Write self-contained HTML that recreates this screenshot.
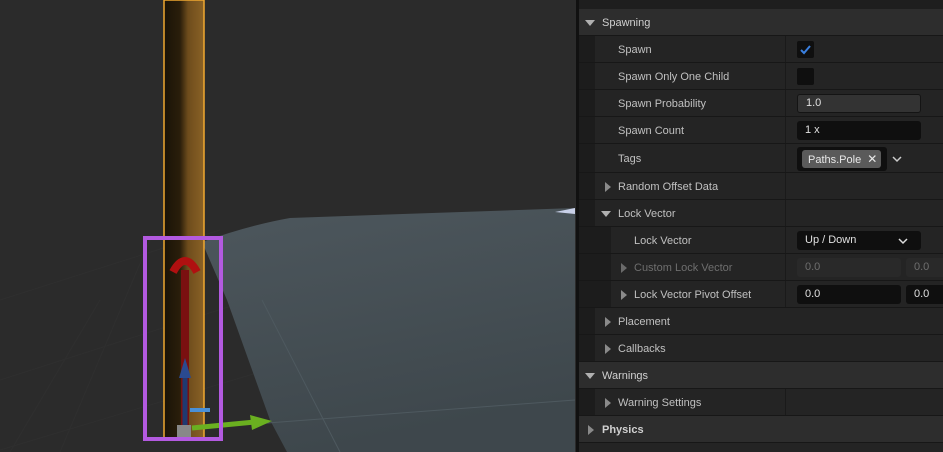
<!DOCTYPE html><html><head><style>
body{margin:0;width:943px;height:452px;overflow:hidden;background:#2a2a2a;font-family:"Liberation Sans",sans-serif;font-size:11px;color:#c0c0c0;position:relative}
.a{position:absolute}
.row{position:absolute;left:579px;width:364px;background:#242424;border-bottom:1px solid #171717;box-sizing:border-box}
.hdr{background:#2d2d2d}
.lbl{position:absolute;top:50%;transform:translateY(-50%);margin-top:1px;white-space:nowrap}
.col{position:absolute;left:206px;top:0;bottom:0;width:1px;background:#1a1a1a}
.gut{position:absolute;top:0;bottom:0;background:#1c1c1c}
.tri-d{position:absolute;width:0;height:0;border-left:5px solid transparent;border-right:5px solid transparent;border-top:6px solid #b0b0b0;top:50%;margin-top:-2px}
.tri-r{position:absolute;width:0;height:0;border-top:5px solid transparent;border-bottom:5px solid transparent;border-left:6px solid #8a8a8a;top:50%;margin-top:-4px}
.box{position:absolute;background:#0f0f0f;border-radius:3px;color:#e0e0e0;box-sizing:border-box;padding-left:8px;line-height:19px;height:19px}
</style></head><body>
<svg class="a" style="left:0;top:0" width="576" height="452">
<rect width="576" height="452" fill="#2b2b2b"/>
<g stroke="#2f2f2f" stroke-width="1">
<line x1="0" y1="300" x2="220" y2="230"/><line x1="0" y1="380" x2="250" y2="300"/><line x1="0" y1="450" x2="300" y2="360"/>
<line x1="60" y1="452" x2="150" y2="240"/><line x1="10" y1="452" x2="100" y2="300"/>
</g>
<defs>
<linearGradient id="pl" x1="0" y1="0" x2="0.3" y2="1"><stop offset="0" stop-color="#4d575d"/><stop offset="1" stop-color="#3e474c"/></linearGradient>
<linearGradient id="p" x1="0" x2="1"><stop offset="0" stop-color="#1a1307"/><stop offset="0.4" stop-color="#2a1e0b"/><stop offset="0.6" stop-color="#6e4c1c"/><stop offset="1" stop-color="#8a6226"/></linearGradient>
</defs>
<path d="M202,242 Q250,225 290,218 L575,208 L575,452 L287,452 L270,420 L227,300 Z" fill="url(#pl)"/>
<line x1="262" y1="300" x2="340" y2="452" stroke="#4e595f" stroke-width="1"/>
<line x1="200" y1="428" x2="575" y2="400" stroke="#4e595f" stroke-width="1"/>
<polygon points="555,212 575,208 575,214" fill="#c8d0e8"/>
<rect x="164" y="0" width="40" height="440" fill="url(#p)" stroke="#f0a830" stroke-width="1.5"/>
<line x1="185" y1="270" x2="185" y2="430" stroke="#7a1010" stroke-width="8"/>
<path d="M173,272 Q185,250 197,272" stroke="#b01010" stroke-width="8" fill="none"/>
<line x1="185" y1="370" x2="185" y2="430" stroke="#1f3a70" stroke-width="5"/>
<polygon points="179,378 185,358 191,378" fill="#2a4a90"/>
<line x1="192" y1="428" x2="255" y2="422" stroke="#6ab020" stroke-width="5"/>
<polygon points="250,415 272,421 252,430" fill="#6ab020"/>
<rect x="190" y="408" width="20" height="4" fill="#4a90d8"/>
<rect x="177" y="425" width="14" height="12" fill="#888"/>
<rect x="145" y="238" width="76" height="201" fill="none" stroke="#b35ae0" stroke-width="4"/>
</svg>
<div class="a" style="left:576px;top:0;width:3px;height:452px;background:#111"></div>
<div class="a" style="left:579px;top:0;width:364px;height:9px;background:#1e1e1e;border-bottom:1px solid #151515"></div>

<div class="row hdr" style="top:9px;height:27px"><div class="tri-d" style="left:6px"></div><div class="lbl" style="left:23px;color:#d0d0d0">Spawning</div></div>

<div class="row" style="top:36px;height:27px"><div class="gut" style="left:0;width:16px"></div><div class="col"></div><div class="lbl" style="left:39px">Spawn</div>
<div class="a" style="left:218px;top:5px;width:17px;height:17px;background:#0f0f0f;border-radius:2px"><svg width="17" height="17"><path d="M4,9 L7,12 L13,5" stroke="#3a80e0" stroke-width="2" fill="none"/></svg></div></div>

<div class="row" style="top:63px;height:27px"><div class="gut" style="left:0;width:16px"></div><div class="col"></div><div class="lbl" style="left:39px">Spawn Only One Child</div>
<div class="a" style="left:218px;top:5px;width:17px;height:17px;background:#0f0f0f;border-radius:2px"></div></div>

<div class="row" style="top:90px;height:27px"><div class="gut" style="left:0;width:16px"></div><div class="col"></div><div class="lbl" style="left:39px">Spawn Probability</div>
<div class="box" style="left:218px;top:4px;width:124px;background:#333;border:1px solid #141414;line-height:17px">1.0</div></div>

<div class="row" style="top:117px;height:27px"><div class="gut" style="left:0;width:16px"></div><div class="col"></div><div class="lbl" style="left:39px">Spawn Count</div>
<div class="box" style="left:218px;top:4px;width:124px">1 x</div></div>

<div class="row" style="top:144px;height:29px"><div class="gut" style="left:0;width:16px"></div><div class="col"></div><div class="lbl" style="left:39px">Tags</div>
<div class="a" style="left:218px;top:3px;width:90px;height:24px;background:#0f0f0f;border-radius:3px"><div class="a" style="left:5px;top:3px;width:79px;height:18px;background:#5a5a5a;border-radius:3px;color:#e8e8e8;line-height:18px;padding-left:6px;box-sizing:border-box">Paths.Pole <span style="margin-left:3px;font-size:12px">✕</span></div></div>
<svg class="a" style="left:312px;top:10px" width="12" height="10"><path d="M2,3 L6,7 L10,3" stroke="#ccc" stroke-width="1.5" fill="none"/></svg></div>

<div class="row" style="top:173px;height:27px"><div class="gut" style="left:0;width:16px"></div><div class="col"></div><div class="tri-r" style="left:26px"></div><div class="lbl" style="left:39px">Random Offset Data</div></div>

<div class="row" style="top:200px;height:27px"><div class="gut" style="left:0;width:16px"></div><div class="col"></div><div class="tri-d" style="left:22px"></div><div class="lbl" style="left:39px">Lock Vector</div></div>

<div class="row" style="top:227px;height:27px"><div class="gut" style="left:0;width:32px"></div><div class="col"></div><div class="lbl" style="left:55px">Lock Vector</div>
<div class="box" style="left:218px;top:4px;width:124px">Up / Down<svg class="a" style="left:100px;top:5px" width="12" height="10"><path d="M2,3 L6,7 L10,3" stroke="#ddd" stroke-width="1.5" fill="none"/></svg></div></div>

<div class="row" style="top:254px;height:27px"><div class="gut" style="left:0;width:32px"></div><div class="col"></div><div class="tri-r" style="left:42px;border-left-color:#6a6a6a"></div><div class="lbl" style="left:55px;color:#6e6e6e">Custom Lock Vector</div>
<div class="box" style="left:218px;top:4px;width:104px;background:#292929;color:#6e6e6e">0.0</div><div class="box" style="left:327px;top:4px;width:40px;background:#292929;color:#6e6e6e">0.0</div></div>

<div class="row" style="top:281px;height:27px"><div class="gut" style="left:0;width:32px"></div><div class="col"></div><div class="tri-r" style="left:42px"></div><div class="lbl" style="left:55px">Lock Vector Pivot Offset</div>
<div class="box" style="left:218px;top:4px;width:104px">0.0</div><div class="box" style="left:327px;top:4px;width:40px">0.0</div></div>

<div class="row" style="top:308px;height:27px"><div class="gut" style="left:0;width:16px"></div><div class="tri-r" style="left:26px"></div><div class="lbl" style="left:39px">Placement</div></div>
<div class="row" style="top:335px;height:27px"><div class="gut" style="left:0;width:16px"></div><div class="tri-r" style="left:26px"></div><div class="lbl" style="left:39px">Callbacks</div></div>

<div class="row hdr" style="top:362px;height:27px"><div class="tri-d" style="left:6px"></div><div class="lbl" style="left:23px;color:#d0d0d0">Warnings</div></div>
<div class="row" style="top:389px;height:27px"><div class="gut" style="left:0;width:16px"></div><div class="col"></div><div class="tri-r" style="left:26px"></div><div class="lbl" style="left:39px">Warning Settings</div></div>
<div class="row hdr" style="top:416px;height:27px"><div class="tri-r" style="left:9px"></div><div class="lbl" style="left:23px;color:#d0d0d0;font-weight:bold">Physics</div></div>
<div class="a" style="left:579px;top:443px;width:364px;height:9px;background:#242424"></div>
</body></html>
